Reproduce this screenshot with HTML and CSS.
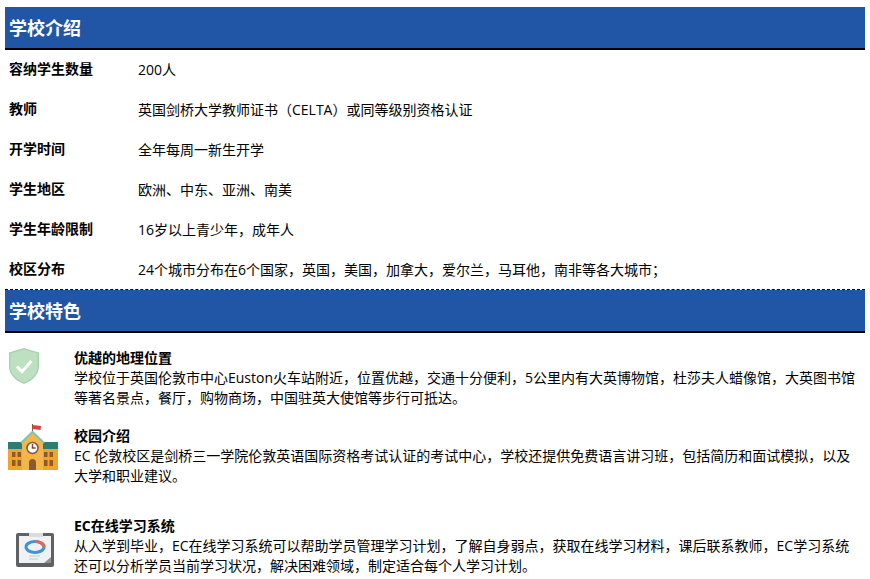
FILE: index.html
```html
<!DOCTYPE html>
<html lang="zh-CN">
<head>
<meta charset="utf-8">
<title>学校介绍</title>
<link rel="stylesheet" href="styles.css">
</head>
<body>
<section class="block">
  <h2 class="bar">学校介绍</h2>
  <dl class="facts">
    <div class="fact"><dt>容纳学生数量</dt><dd>200人</dd></div>
    <div class="fact"><dt>教师</dt><dd>英国剑桥大学教师证书（CELTA）或同等级别资格认证</dd></div>
    <div class="fact"><dt>开学时间</dt><dd>全年每周一新生开学</dd></div>
    <div class="fact"><dt>学生地区</dt><dd>欧洲、中东、亚洲、南美</dd></div>
    <div class="fact"><dt>学生年龄限制</dt><dd>16岁以上青少年，成年人</dd></div>
    <div class="fact"><dt>校区分布</dt><dd>24个城市分布在6个国家，英国，美国，加拿大，爱尔兰，马耳他，南非等各大城市；</dd></div>
  </dl>
</section>
<section class="block block-dashed">
  <h2 class="bar">学校特色</h2>
  <div class="features">
    <article class="feature f1">
      <svg class="icon" width="30" height="36" viewBox="0 0 30 36"><path d="M15 .7 L29.3 5 V18 C29.3 26 23 32 15 35.3 C7 32 .7 26 .7 18 V5 Z" fill="#bde0c0" stroke="#9fd0a8" stroke-width="1.2"/><path d="M8 18.500 L13 23.500 L22.500 13" fill="none" stroke="#fff" stroke-width="3"/></svg>
      <div class="copy"><h3>优越的地理位置</h3><p>学校位于英国伦敦市中心Euston火车站附近，位置优越，交通十分便利，5公里内有大英博物馆，杜莎夫人蜡像馆，大英图书馆等著名景点，餐厅，购物商场，中国驻英大使馆等步行可抵达。</p></div>
    </article>
    <article class="feature f2">
      <svg class="icon" width="50" height="48" viewBox="0 0 50 48"><rect x="24" y="1" width="1" height="9" fill="#8a5a3a"/><path d="M24.500 2 L33 3 L32.500 7 L24.500 6 Z" fill="#d9403f"/><rect x="0" y="26" width="50" height="21" fill="#eea52c"/><path d="M0 19 H15 V26 H0 Z M50 19 H34 V26 H50 Z" fill="#27806f"/><path d="M14 47 V19 L24.500 9 L35 19 V47 Z" fill="#f4b54a"/><path d="M13 20 L24.500 9 L36 20" fill="none" stroke="#7ec4b4" stroke-width="2"/><circle cx="24.500" cy="25" r="5.500" fill="#fff" stroke="#7a5a48" stroke-width="1.500"/><path d="M24.500 21 V25 H27.500" fill="none" stroke="#7a4a36" stroke-width="1.500"/><path d="M21 47 V39.500 A3.500 3.500 0 0 1 28 39.500 V47 Z" fill="#8d5a30"/><g fill="#8d5a30"><rect x="4" y="29" width="3.500" height="5"/><rect x="9.500" y="29" width="3.500" height="5"/><rect x="4" y="37" width="3.500" height="6"/><rect x="9.500" y="37" width="3.500" height="6"/><rect x="36" y="29" width="3.500" height="5"/><rect x="41.500" y="29" width="3.500" height="5"/><rect x="36" y="37" width="3.500" height="6"/><rect x="41.500" y="37" width="3.500" height="6"/></g></svg>
      <div class="copy"><h3>校园介绍</h3><p>EC 伦敦校区是剑桥三一学院伦敦英语国际资格考试认证的考试中心，学校还提供免费语言讲习班，包括简历和面试模拟，以及大学和职业建议。</p></div>
    </article>
    <article class="feature f3">
      <svg class="icon" width="38" height="35" viewBox="0 0 38 35"><rect x="0" y="1" width="38" height="34" rx="2" fill="#5f6163"/><rect x="3" y="4" width="32" height="27" fill="#eef2f4"/><rect x="13" y="1" width="14" height="4" fill="#d9dcdd"/><ellipse cx="19" cy="15" rx="9" ry="5.500" fill="none" stroke="#3f93d6" stroke-width="3"/><path d="M19 9.500 A9 5.500 0 0 1 28 15" fill="none" stroke="#e8635a" stroke-width="3"/><path d="M13 24 H24 M13 27 H22" stroke="#c4c8ca" stroke-width="1"/><path d="M35 25 V31 H28 Z" fill="#8f9193"/></svg>
      <div class="copy"><h3>EC在线学习系统</h3><p>从入学到毕业，EC在线学习系统可以帮助学员管理学习计划，了解自身弱点，获取在线学习材料，课后联系教师，EC学习系统还可以分析学员当前学习状况，解决困难领域，制定适合每个人学习计划。</p></div>
    </article>
  </div>
</section>
</body>
</html>
```
FILE: styles.css
```css
html, body { margin: 0; padding: 0; background: #fff; }
body {
  width: 870px;
  height: 579px;
  overflow: hidden;
  padding: 7px 5px 0;
  box-sizing: border-box;
  font-family: "Open Sans", "Noto Sans CJK SC", sans-serif;
  font-size: 14px;
  color: #000;
}
.bar {
  margin: 0;
  height: 41px;
  line-height: 43px;
  padding-left: 4px;
  background: #2155a5;
  color: #fff;
  font-size: 18px;
  font-weight: 700;
  border-bottom: 2px solid #000;
}
.facts { margin: 0; padding-left: 4px; height: 239px; }
.fact { display: flex; height: 40px; align-items: center; }
.fact dt { width: 129px; font-weight: 700; margin-top: -4px; }
.fact dd { margin: -2px 0 0; }
.block-dashed { border-top: 1px dashed #000; }
.features { padding: 15px 0 0 4px; }
.feature { display: flex; align-items: flex-start; }
.copy { flex: 1; line-height: 20px; }
.copy h3 { margin: 0; font-size: 14px; font-weight: 700; line-height: 20px; }
.copy p { margin: 0; padding-right: 5px; }
.f1 { height: 78px; }
.f2 { height: 90px; }
.f1 .icon { margin: 0 35px 0 0; }
.f2 .icon { margin: -3px 16px 0 -1px; }
.f3 .icon { margin: 16px 20px 0 7px; }
```
